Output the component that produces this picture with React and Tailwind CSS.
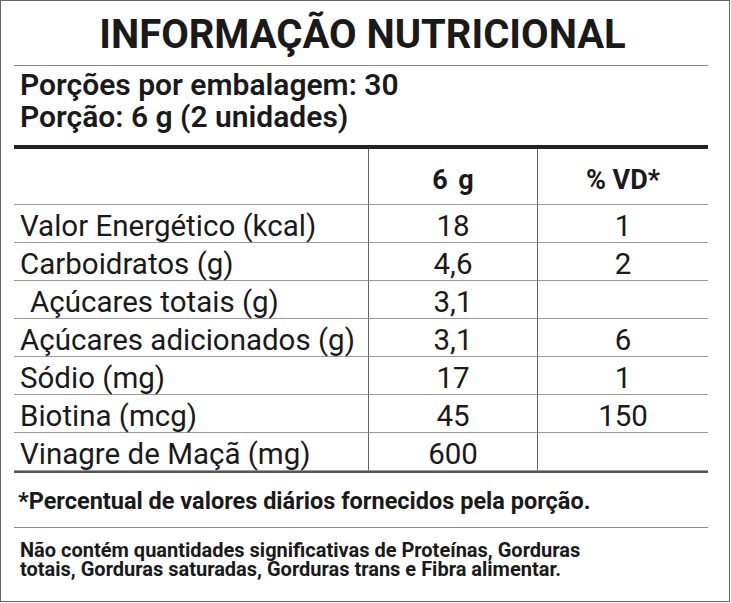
import React from 'react';

const rows = [
  { label: 'Valor Energético (kcal)', qty: '18', vd: '1' },
  { label: 'Carboidratos (g)', qty: '4,6', vd: '2' },
  { label: 'Açúcares totais (g)', qty: '3,1', vd: '', indent: true },
  { label: 'Açúcares adicionados (g)', qty: '3,1', vd: '6' },
  { label: 'Sódio (mg)', qty: '17', vd: '1' },
  { label: 'Biotina (mcg)', qty: '45', vd: '150' },
  { label: 'Vinagre de Maçã (mg)', qty: '600', vd: '' },
];

const App = () => {
  return (
    <div className="w-[731px] h-[603px] bg-white font-['Roboto',sans-serif] text-[#1a1a1a]">
      <div className="w-[730px] h-[602px] border border-[#666] pl-[13px] pr-[21px]">
        {/* Title */}
        <div className="h-[64px] flex items-center justify-center">
          <h1 className="text-[40px] font-bold leading-none pt-[4px] pl-[3px]">INFORMAÇÃO NUTRICIONAL</h1>
        </div>
        <div className="h-px bg-[#8a8a8a]"></div>

        {/* Servings */}
        <div className="pt-[3px] pb-[12px] pl-[6px] text-[30px] font-semibold leading-[32px]">
          <p>Porções por embalagem: 30</p>
          <p>Porção: 6 g (2 unidades)</p>
        </div>
        <div className="h-[4px] bg-[#222]"></div>

        {/* Table */}
        <div className="grid grid-cols-[354px_169px_1fr] border-b-2 border-[#555]">
          <div className="h-[56px] border-b border-[#9a9a9a]"></div>
          <div className="h-[56px] border-b border-l border-[#9a9a9a] border-l-[#666] flex items-center justify-center pt-[8px] text-[27px] font-bold [word-spacing:4px]">6 g</div>
          <div className="h-[56px] border-b border-l border-[#9a9a9a] border-l-[#666] flex items-center justify-center pt-[8px] text-[27px] font-bold">% VD*</div>
          {rows.map((r, i) => (
            <React.Fragment key={i}>
              <div className={`h-[38px] flex items-center pt-[5px] text-[29.5px] border-b border-[#9a9a9a] ${r.indent ? 'pl-[16px]' : 'pl-[6px]'}`}>
                {r.label}
              </div>
              <div className="h-[38px] flex items-center justify-center pt-[5px] text-[29.5px] border-l border-l-[#666] border-b border-b-[#9a9a9a]">
                {r.qty}
              </div>
              <div className="h-[38px] flex items-center justify-center pt-[5px] text-[29.5px] border-l border-l-[#666] border-b border-b-[#9a9a9a]">
                {r.vd}
              </div>
            </React.Fragment>
          ))}
        </div>

        {/* Footnote */}
        <div className="h-[54px] flex items-center pt-[4px] pl-[4px] text-[23.5px] font-bold">
          *Percentual de valores diários fornecidos pela porção.
        </div>
        <div className="h-px bg-[#8a8a8a]"></div>
        <p className="pt-[13px] pl-[6px] text-[20px] font-bold leading-[19px]">
          Não contém quantidades significativas de Proteínas, Gorduras
          <br />
          totais, Gorduras saturadas, Gorduras trans e Fibra alimentar.
        </p>
      </div>
    </div>
  );
};

export default App;
